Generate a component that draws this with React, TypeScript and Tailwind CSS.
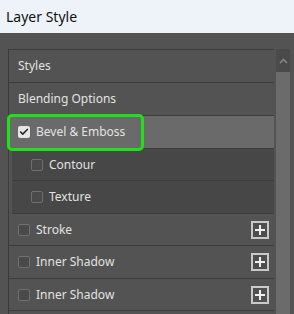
import { Check } from 'lucide-react';

type Row = {
  label: string;
  h: number;
  check?: 'none' | 'on' | 'off';
  sub?: boolean;
  selected?: boolean;
  plus?: boolean;
};

// alturas medidas de la captura (incluye el borde inferior)
const rows: Row[] = [
  { label: 'Styles', h: 34, check: 'none' },
  { label: 'Blending Options', h: 33, check: 'none' },
  { label: 'Bevel & Emboss', h: 33, check: 'on', selected: true },
  { label: 'Contour', h: 32, check: 'off', sub: true },
  { label: 'Texture', h: 33, check: 'off', sub: true },
  { label: 'Stroke', h: 32, check: 'off', plus: true },
  { label: 'Inner Shadow', h: 33, check: 'off', plus: true },
  { label: 'Inner Shadow', h: 32, check: 'off', plus: true },
];

function Box({ on }: { on: boolean }) {
  if (on) {
    return (
      <span className="flex h-[12px] w-[12px] items-center justify-center rounded-[2px] bg-[#e6e6e6]">
        <Check size={10} strokeWidth={4} className="text-[#2a2a2a]" />
      </span>
    );
  }
  return <span className="h-[12px] w-[12px] rounded-[2px] border border-[#707070] bg-[#4a4a4a]" />;
}

function PlusButton() {
  return (
    <span className="relative flex h-[18px] w-[18px] items-center justify-center border-2 border-[#c9c9c9] bg-[#4f4f4f]">
      <span className="absolute h-[2px] w-[10px] bg-[#f0f0f0]" />
      <span className="absolute h-[10px] w-[2px] bg-[#f0f0f0]" />
    </span>
  );
}

export default function App() {
  return (
    <div
      className="relative h-[314px] w-[294px] overflow-hidden bg-[#535353]"
      style={{ fontFamily: '"Noto Sans", "Open Sans", sans-serif' }}
    >
      {/* barra de título */}
      <div className="flex h-[33px] items-center bg-[#eef3f9] pl-[6px] text-[14px] text-[#111]">Layer Style</div>

      <div className="flex pl-[8px] pt-[16px]">
        {/* lista de estilos */}
        <div className="w-[266px] border-l border-t border-[#3c3c3c]">
          {rows.map((r, i) => (
            <div
              key={i}
              style={{ height: r.h - (i === 0 ? 1 : 0) }}
              className={
                'flex items-center border-b border-[#3c3c3c] text-[12px] text-[#e2e2e2] ' +
                (r.selected ? 'bg-[#6a6a6a] ' : '') +
                (r.sub ? 'ml-[3px] bg-[#474747] pl-[19px]' : 'pl-[9px]')
              }
            >
              {r.check !== 'none' && (
                <span className="mr-[6px] flex">
                  <Box on={r.check === 'on'} />
                </span>
              )}
              <span className="flex-1">{r.label}</span>
              {r.plus && (
                <span className="mr-[5px] flex">
                  <PlusButton />
                </span>
              )}
            </div>
          ))}
        </div>

        {/* scrollbar */}
        <div className="ml-[2px] flex w-[14px] flex-col bg-[#4a4a4a]">
          <div className="flex h-[23px] items-center justify-center">
            <svg width="9" height="6" viewBox="0 0 9 6">
              <path d="M1 5 L4.5 1.5 L8 5" stroke="#8a8a8a" strokeWidth="1.5" fill="none" />
            </svg>
          </div>
          <div className="h-[300px] bg-[#6b6b6b]" />
        </div>
      </div>

      {/* resaltado verde */}
      <div className="absolute left-[7px] top-[114px] h-[37px] w-[137px] rounded-[5px] border-[3px] border-[#1fe01a]" />
    </div>
  );
}
